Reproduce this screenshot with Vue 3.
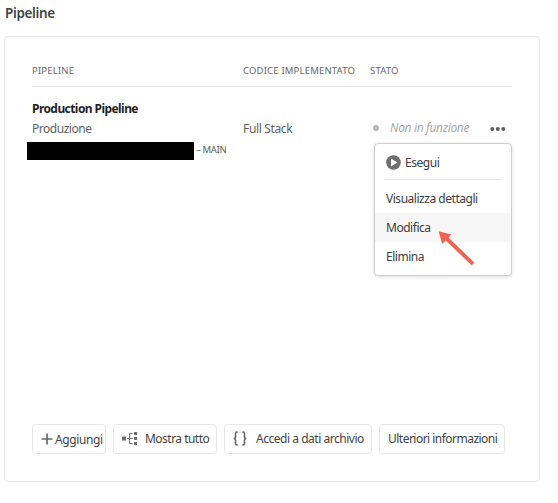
<script setup>
const items = [
  { label: 'Visualizza dettagli', key: 'details' },
  { label: 'Modifica', key: 'edit', active: true },
  { label: 'Elimina', key: 'delete' },
]
</script>

<template>
  <main class="page">
    <h1 class="title">Pipeline</h1>
    <section class="card">
      <div class="grid head">
        <span>PIPELINE</span>
        <span>CODICE IMPLEMENTATO</span>
        <span>STATO</span>
      </div>
      <div class="name">Production Pipeline</div>
      <div class="grid row">
        <span>Produzione</span>
        <span class="stack">Full Stack</span>
        <div class="status">
          <i class="dot"></i>
          <em>Non in funzione</em>
          <svg class="more" width="16" height="6" viewBox="0 0 16 6">
            <circle cx="2.3" cy="3" r="2" /><circle cx="7.8" cy="3" r="2" /><circle cx="13.3" cy="3" r="2" />
          </svg>
          <div class="menu">
            <div class="item run">
              <svg width="15" height="15" viewBox="0 0 15 15">
                <circle cx="7.5" cy="7.5" r="7.3" fill="#6e6e6e" />
                <path d="M5 3.4 11.4 7.5 5 11.6Z" fill="#fff" />
              </svg>
              <span>Esegui</span>
            </div>
            <div class="rule"></div>
            <div v-for="i in items" :key="i.key" class="item" :class="{ active: i.active }">{{ i.label }}</div>
            <svg class="arrow" width="38" height="38" viewBox="0 0 38 38">
              <path d="M.6 1.2 13.2 4.4 10.6 7.7 36.2 32.4 33.8 35.4 7.8 10.6 4.2 14Z" fill="#ee6352" />
            </svg>
          </div>
        </div>
      </div>
      <div class="branch">
        <div class="redacted"></div>
        <span class="main">– MAIN</span>
      </div>
      <footer class="actions">
        <button class="btn add">
          <svg width="12" height="12" viewBox="0 0 12 12"><path d="M6 .5V11.5M.5 6H11.5" stroke="#6a6a6a" stroke-width="1.7" /></svg>
          <span>Aggiungi</span>
        </button>
        <button class="btn all">
          <svg width="16" height="13" viewBox="0 0 16 13">
            <path d="M0 4.5H4V8.5H0ZM12 0H15V3H12ZM12 5H15V8H12ZM12 10H15V13H12Z" fill="#6e6e6e" />
            <path d="M5 6.5H11M10.8 1.5H7.5V11.5H10.8" fill="none" stroke="#777" />
          </svg>
          <span>Mostra tutto</span>
        </button>
        <button class="btn repo">
          <svg width="14" height="15" viewBox="0 0 14 15" fill="none" stroke="#666" stroke-width="1.6">
            <path d="M4.7 1H4Q2.5 1 2.5 2.5V5.7Q2.5 7.4.8 7.5 2.5 7.6 2.5 9.3V12.5Q2.5 14 4 14H4.7M9.3 1H10Q11.5 1 11.5 2.5V5.7Q11.5 7.4 13.2 7.5 11.5 7.6 11.5 9.3V12.5Q11.5 14 10 14H9.3" />
          </svg>
          <span>Accedi a dati archivio</span>
        </button>
        <button class="btn info"><span>Ulteriori informazioni</span></button>
      </footer>
    </section>
  </main>
</template>

<style>
body { background: #fff; }
</style>

<style scoped>
* { box-sizing: border-box; }
.page {
  width: 558px;
  height: 503px;
  padding: 4px 0 0 4px;
  font-family: "Noto Sans", "Open Sans", sans-serif;
  font-size: 12px;
  letter-spacing: -.47px;
  color: #444;
  white-space: nowrap;
}
.title { margin: 0 0 12px 1px; height: 20px; line-height: 19px; font-size: 13.5px; font-weight: 600; letter-spacing: -.35px; }
.card {
  display: flex;
  flex-direction: column;
  width: 536px;
  height: 446px;
  border: 1px solid #e6e6e6;
  border-radius: 4px;
  padding: 20px 27px 27px;
}
.grid { display: grid; grid-template-columns: 211px 127px 141px; }
.head {
  height: 30px;
  line-height: 28px;
  border-bottom: 1px solid #e6e6e6;
  font-size: 9.5px;
  color: #686868;
  letter-spacing: .18px;
}
.name { height: 21px; margin-top: 11px; line-height: 21px; font-weight: 700; color: #1f1f1f; letter-spacing: -.57px; }
.row { height: 20px; line-height: 20px; color: #626262; }
.stack { letter-spacing: -.35px; }
.status { position: relative; display: flex; align-items: center; }
.dot { width: 6px; height: 6px; margin: -3px 11px 0 3px; border-radius: 50%; background: #b9b9b9; }
em { margin-top: -3px; color: #a8a8a8; letter-spacing: -.35px; }
.more { position: absolute; left: 120px; top: 7px; fill: #5f5f5f; }
.menu {
  position: absolute;
  left: 4px;
  top: 24px;
  width: 138px;
  height: 133px;
  padding: 4px 0;
  background: #fff;
  border: 1px solid #cdcdcd;
  border-radius: 4px;
  box-shadow: 0 1px 4px rgba(0, 0, 0, .13);
  color: #404040;
}
.item { height: 29px; line-height: 29px; padding-left: 11px; }
.run { display: flex; align-items: center; gap: 4px; }
.rule { height: 1px; margin: 2px 9px 4px; background: #e6e6e6; }
.active { background: #f6f6f6; }
.arrow { position: absolute; left: 63px; top: 86px; }
.branch { display: flex; align-items: center; height: 18px; margin: 3px 0 0 -5px; }
.redacted { width: 167px; height: 18px; background: #000; }
.main { margin-left: 2px; font-size: 9.5px; line-height: 14px; margin-top: -3px; color: #606060; letter-spacing: -.35px; }
.actions { display: flex; gap: 7px; margin-top: auto; }
.btn {
  display: flex;
  align-items: center;
  height: 30px;
  padding: 0 0 2px 8px;
  border: 1px solid #e6e6e6;
  border-radius: 4px;
  background: #fff;
  color: #444;
  font: inherit;
  letter-spacing: inherit;
}
.add { width: 74px; gap: 2px; padding-bottom: 0; letter-spacing: -.4px; }
.all { width: 104px; gap: 7px; letter-spacing: -.52px; }
.repo { width: 148px; gap: 9px; }
.info { width: 126px; letter-spacing: -.52px; }
</style>
